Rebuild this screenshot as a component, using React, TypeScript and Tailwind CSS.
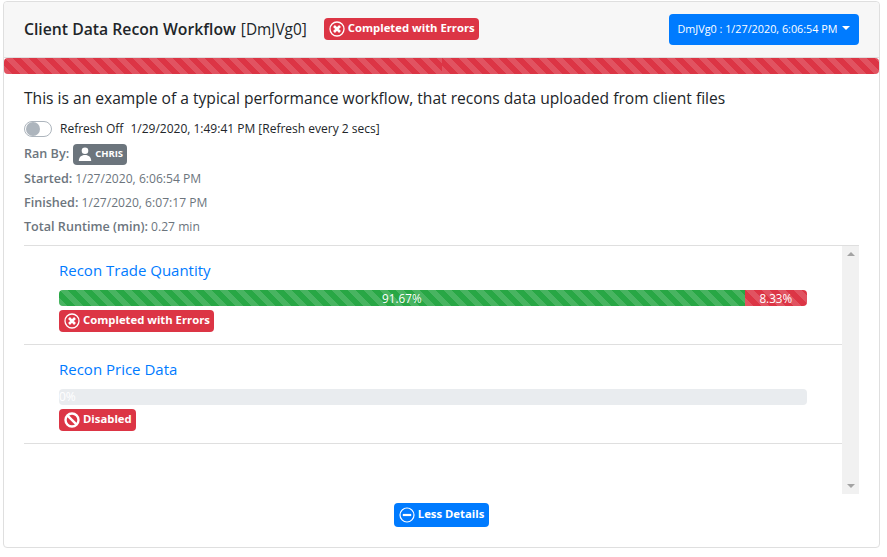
const stripes = "bg-[linear-gradient(45deg,rgba(255,255,255,0.15)_25%,transparent_25%,transparent_50%,rgba(255,255,255,0.15)_50%,rgba(255,255,255,0.15)_75%,transparent_75%,transparent)] bg-[length:16px_16px]";

function XIcon() {
  return (
    <svg width="16" height="16" viewBox="0 0 16 16" fill="none" stroke="white" className="shrink-0">
      <circle cx="8" cy="8" r="7" strokeWidth="1.3" />
      <path d="M5 5l6 6M11 5l-6 6" strokeWidth="2.6" />
    </svg>
  );
}

function BanIcon() {
  return (
    <svg width="16" height="16" viewBox="0 0 16 16" fill="none" stroke="white" className="shrink-0">
      <circle cx="8" cy="8" r="6.5" strokeWidth="2.4" />
      <path d="M3.6 3.6l8.8 8.8" strokeWidth="2.4" />
    </svg>
  );
}

function MinusIcon() {
  return (
    <svg width="16" height="16" viewBox="0 0 16 16" fill="none" stroke="white" className="shrink-0">
      <circle cx="8" cy="8" r="7" strokeWidth="1.2" />
      <path d="M3.8 8h8.4" strokeWidth="2.2" />
    </svg>
  );
}

function UserIcon() {
  return (
    <svg width="16" height="16" viewBox="0 0 16 16" fill="white" className="shrink-0">
      <circle cx="8" cy="4.8" r="3.3" />
      <path d="M1.8 15c0-3.8 2.4-6 6.2-6s6.2 2.2 6.2 6z" />
    </svg>
  );
}

function Badge({ icon, label }: { icon: React.ReactNode; label: string }) {
  return (
    <span className="inline-flex h-[22px] items-center gap-[3px] rounded-[4px] bg-[#dc3545] pl-[5px] pr-[4px] pb-[3px] text-[11.3px] font-bold leading-none text-white">
      <span className="pt-[3px]">{icon}</span>
      {label}
    </span>
  );
}

function Info({ label, value }: { label: string; value: string }) {
  return (
    <div className="h-[24px] text-[12.1px] leading-[24px] text-[#6c757d]">
      <b className="text-[12.6px] font-semibold">{label}</b> {value}
    </div>
  );
}

export default function App() {
  return (
    <div className="h-[557px] w-[887px] bg-white pl-[3px] pt-[1px] font-['Open_Sans','Noto_Sans',sans-serif] text-[#212529]">
      <div className="flex h-[547px] w-[877px] flex-col rounded-[4px] border border-[#dfdfdf]">
        <div className="flex h-[56px] items-center justify-between rounded-t-[4px] border-b border-[#dfdfdf] bg-[#f7f7f7] pl-[20px] pr-[20px]">
          <div className="flex items-center">
            <span className="text-[15.75px] font-semibold">Client Data Recon Workflow</span>
            <span className="ml-[5px] text-[15.4px]">[DmJVg0]</span>
            <span className="ml-[17px] mt-[-1px] flex"><Badge icon={<XIcon />} label="Completed with Errors" /></span>
          </div>
          <button className="flex h-[31px] w-[190px] items-center justify-center gap-[5px] rounded-[4px] bg-[#007bff] text-[10.8px] text-white">
            DmJVg0 : 1/27/2020, 6:06:54 PM
            <span className="mb-[3px] h-0 w-0 border-x-[4px] border-t-[4px] border-x-transparent border-t-white" />
          </button>
        </div>
        <div className="flex h-[16px] overflow-hidden rounded-[4px]">
          <div className={`w-1/2 bg-[#dc3545] ${stripes}`} />
          <div className={`w-1/2 bg-[#dc3545] ${stripes}`} />
        </div>
        <div className="flex flex-1 flex-col px-[20px]">
          <p className="mt-[13px] h-[22px] text-[15.6px] font-medium leading-[22px] text-[#212529]">
            This is an example of a typical performance workflow, that recons data uploaded from client files
          </p>
          <div className="mt-[10px] flex h-[20px] items-center text-[12px] text-[#212529]">
            <span className="mr-[8px] flex h-[16px] w-[28px] items-center rounded-full border border-[#adb5bd] bg-white pl-[1px]">
              <span className="h-[14px] w-[14px] rounded-full bg-[#adb5bd]" />
            </span>
            <span>Refresh Off</span>
            <span className="ml-[7px]">1/29/2020, 1:49:41 PM [Refresh every 2 secs]</span>
          </div>
          <div className="mt-[4px] flex h-[22px] items-center text-[12.6px] text-[#6c757d]">
            <b className="font-semibold">Ran By:</b>
            <span className="ml-[4px] inline-flex h-[21px] w-[54px] items-center gap-[2px] rounded-[4px] bg-[#6c757d] pl-[4px] text-[9.5px] font-bold text-white">
              <UserIcon />CHRIS
            </span>
          </div>
          <div className="mt-[2px]">
            <Info label="Started:" value="1/27/2020, 6:06:54 PM" />
            <Info label="Finished:" value="1/27/2020, 6:07:17 PM" />
            <Info label="Total Runtime (min):" value="0.27 min" />
          </div>
          <div className="mt-[6px] flex h-[249px] border-t border-[#dfdfdf]">
            <div className="flex-1">
              <div className="h-[99px] border-b border-[#dfdfdf] px-[35px] pt-[12px]">
                <div className="h-[24px] text-[15px] leading-[24px] text-[#007bff]">Recon Trade Quantity</div>
                <div className="mt-[8px] flex h-[16px] overflow-hidden rounded-[4px] text-[11.7px] leading-[16px] text-white">
                  <div className={`w-[91.67%] bg-[#28a745] text-center ${stripes}`}>91.67%</div>
                  <div className={`w-[8.33%] bg-[#dc3545] text-center ${stripes}`}>8.33%</div>
                </div>
                <div className="mt-[4px] flex"><Badge icon={<XIcon />} label="Completed with Errors" /></div>
              </div>
              <div className="h-[99px] border-b border-[#dfdfdf] px-[35px] pt-[12px]">
                <div className="h-[24px] text-[15px] leading-[24px] text-[#007bff]">Recon Price Data</div>
                <div className="mt-[8px] h-[16px] overflow-hidden rounded-[4px] bg-[#e9ecef] text-[12px] leading-[16px] text-white">0%</div>
                <div className="mt-[4px] flex"><Badge icon={<BanIcon />} label="Disabled" /></div>
              </div>
            </div>
            <div className="flex h-[248px] w-[17px] flex-col items-center justify-between bg-[#f1f1f1] py-[6px]">
              <span className="h-0 w-0 border-x-[4px] border-b-[4px] border-x-transparent border-b-[#a3a3a3]" />
              <span className="h-0 w-0 border-x-[4px] border-t-[4px] border-x-transparent border-t-[#a3a3a3]" />
            </div>
          </div>
          <div className="mt-[9px] flex justify-center">
            <button className="flex h-[24px] w-[95px] items-center justify-center gap-[3px] rounded-[4px] bg-[#007bff] pb-[1px] text-[11.3px] font-bold text-white">
              <MinusIcon />Less Details
            </button>
          </div>
        </div>
      </div>
    </div>
  );
}
